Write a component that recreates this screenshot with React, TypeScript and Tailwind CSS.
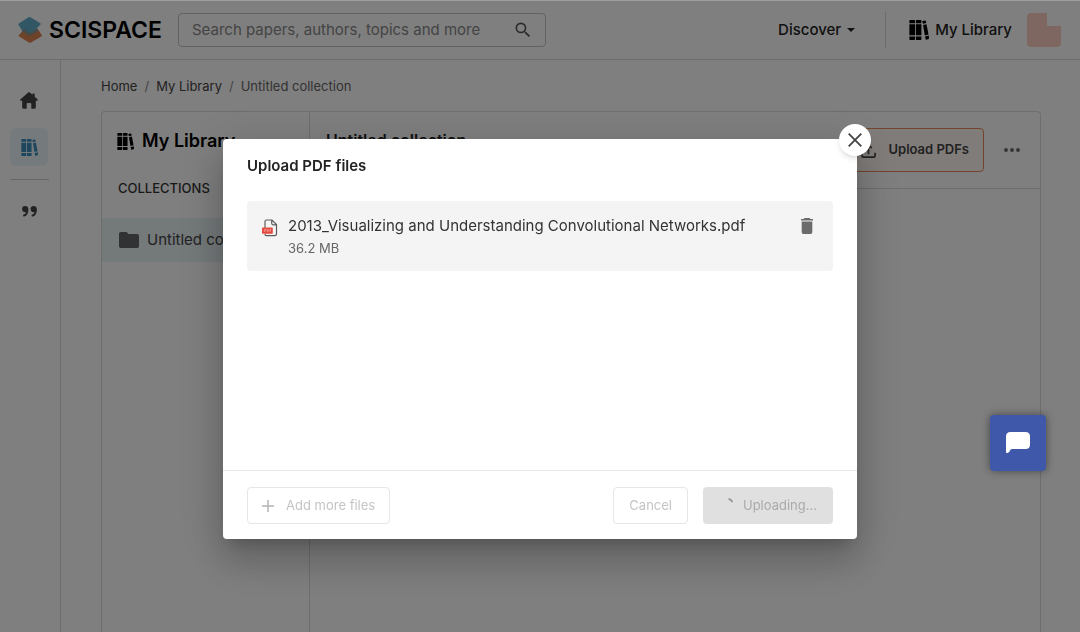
import type { ReactNode } from 'react';

function BooksIcon({ className }: { className: string }) {
  return (
    <svg viewBox="0 0 20 20" fill="currentColor" className={className} aria-hidden="true">
      <path d="M1.200 0h4.200q.6 0 .6.600V3.200H.4V.6Q.4 0 1.200 0zM.4 4.300h5.600v11H.4zM.4 16.400h5.600v2.900q0 .7-.7.7H1.100q-.7 0-.7-.7z" />
      <path d="M7.600 0H11.800q.6 0 .6.600V3.200H6.900V.6Q6.900 0 7.600 0zM6.900 4.300h5.500v11H6.900zM6.900 16.400h5.500v2.900q0 .7-.7.7H7.600q-.7 0-.7-.7z" />
      <path d="M13.600 1.100 16 .5q.7-.1.800.5l.5 2-3.300.8-.6-1.900q-.2-.6.2-.8zM14.100 5l3.400-.8 2 10.300-3.700.9zM16 16.500l3.800-.9.200 2.500q.1.800-.6 1l-2 .6q-.7.1-.8-.6z" />
    </svg>
  );
}

function Logo() {
  return (
    <a href="#home" className="flex w-[145px] shrink-0 items-center gap-[7px] pt-px text-[23px] leading-7 font-semibold text-black">
      <svg viewBox="0 0 24 28" className="h-7 w-6 shrink-0" aria-hidden="true">
        <path d="M5 14.500.9 19.200q-.6.800.3 1.400L11 26.500q1 .6 2 0l10.300-6q.9-.6.400-1.500L19.500 12.500z" fill="#dd8450" />
        <path d="M.8 7.500 10.500 1.300q1-.6 2 0l9.800 5.900q.9.600.2 1.400L18.500 12.500l1.500 2.300-7.300 4.300q-1 .5-2 0L4.300 14.700.5 8.900q-.4-.9.300-1.400z" fill="#62aecb" />
        <path d="M5 14 3.700 15.500 10.700 19.300q1 .5 2 0l7.600-4.400-1.200-2-6.600 3.500q-1 .5-2 0L6.500 13.500z" fill="#8f958b" />
      </svg>
      SCISPACE
    </a>
  );
}

function FolderIcon() {
  return (
    <svg viewBox="0 0 20 16" fill="currentColor" className="h-4 w-5 shrink-0 text-[#626466]" aria-hidden="true">
      <path d="M1.800 0h5.700l2 2h8.700Q20 2 20 3.800v10.400q0 1.800-1.800 1.800H1.800Q0 16 0 14.200V1.800Q0 0 1.800 0z" />
    </svg>
  );
}

function PdfIcon() {
  return (
    <svg viewBox="0 0 16 18" className="h-[18px] w-4 shrink-0" aria-hidden="true">
      <path d="M3 9V2.500Q3 1 4.500 1H10l4.500 4.500V15q0 1.700-1.700 1.700H4.300Q3 16.700 3 15M9.700 1v3.300q0 1.500 1.500 1.500h3" fill="none" stroke="#5c5c5c" strokeWidth="1.200" />
      <rect x="0" y="8.500" width="10.800" height="6.200" rx=".8" fill="#e5483d" />
      <path d="M2.300 13v-2.700h1q.8 0 .8.800t-.8.800h-1M5.200 10.300v2.500q1.500.1 1.500-1.200t-1.500-1.300M8 13v-2.700h1.300M8 11.600h1" fill="none" stroke="#f7b1ab" strokeWidth=".6" />
    </svg>
  );
}

function TopBar() {
  return (
    <header className="flex h-[60px] items-center border-b border-[#d8d8d8] pr-[19px] pl-[18px]">
      <Logo />
      <form className="ml-[15px] flex h-[34px] w-[368px] items-center rounded border border-[#c4c4c4] pr-3 pl-[13px]">
        <input
          type="text"
          aria-label="Search papers"
          placeholder="Search papers, authors, topics and more"
          className="min-w-0 flex-1 bg-transparent pt-px text-[15px] text-[#333] outline-none placeholder:text-[#888]"
        />
        <button type="submit" aria-label="Search" className="text-[#555]">
          <svg viewBox="0 0 24 24" fill="currentColor" className="size-5" aria-hidden="true">
            <path d="M15.500 14h-.79l-.28-.27A6.470 6.470 0 0 0 16 9.500 6.500 6.500 0 1 0 9.500 16c1.610 0 3.090-.59 4.230-1.570l.27.28v.79l5 4.990L20.490 19zm-6 0a4.500 4.500 0 1 1 0-9 4.500 4.500 0 0 1 0 9" />
          </svg>
        </button>
      </form>
      <nav className="ml-auto flex items-center text-[15px] font-medium text-[#222]">
        <button type="button" className="flex items-center gap-[6px] pt-px">
          Discover
          <svg viewBox="0 0 8 4" fill="currentColor" className="h-1 w-2" aria-hidden="true">
            <path d="M0 0h8L4 4z" />
          </svg>
        </button>
        <span className="mr-[23px] ml-[30px] h-9 w-px bg-[#d8d8d8]" />
        <a href="#library" className="flex items-center gap-[6px] pt-px">
          <BooksIcon className="size-5 text-black" />
          My Library
        </a>
        <svg viewBox="0 0 34 34" className="ml-[15px] size-[34px]" role="img" aria-label="Account">
          <path d="M4 0h16v13h14v17q0 4-4 4H4q-4 0-4-4V4q0-4 4-4z" fill="#ffcfc2" />
        </svg>
      </nav>
    </header>
  );
}

function SideRail() {
  return (
    <nav className="flex w-[61px] shrink-0 flex-col items-center border-r border-[#d8d8d8] pt-5 pr-0.5">
      <a href="#home" aria-label="Home" className="flex size-10 items-center justify-center text-[#444]">
        <svg viewBox="0 0 18 17" fill="currentColor" className="h-[17px] w-[18px]" aria-hidden="true">
          <path d="M8.200.4q.8-.7 1.600 0l2.700 2.400V1.500h2.200v3.300l3 2.700q.6.900-.6 1.300H15.800v6.400q0 1.500-1.500 1.500h-3V12q0-1-1-1H7.700q-1 0-1 1v4.700h-3q-1.500 0-1.500-1.500V8.800H.9Q-.3 8.400.3 7.500z" />
        </svg>
      </a>
      <a href="#library" aria-label="My Library" className="mt-2 flex size-[38px] items-center justify-center rounded-md bg-[#eaf4fb] text-[#3d8fbb]">
        <BooksIcon className="size-[17px]" />
      </a>
      <span className="mt-[13px] h-px w-[39px] bg-[#cfcfcf]" />
      <a href="#citations" aria-label="Citations" className="mt-[11px] flex size-10 items-center justify-center text-[#444]">
        <svg viewBox="0 0 15 11" fill="currentColor" className="h-[11px] w-[15px]" aria-hidden="true">
          <path d="M3.200 0a3.100 3.100 0 0 0 0 6.200q.5 0 .8-.1Q3.800 8 1.500 8.800q-.7.500-.4 1.200t1.200.6Q6.400 9.200 6.400 3.500 6.400 0 3.200 0M11.700 0a3.100 3.100 0 0 0 0 6.200q.5 0 .8-.1Q12.300 8 10 8.800q-.7.500-.4 1.200t1.200.6q4.100-1.400 4.100-7.100Q14.900 0 11.700 0" />
        </svg>
      </a>
    </nav>
  );
}

function Crumb({ children }: { children: ReactNode }) {
  return (
    <>
      <a href="#library">{children}</a>
      <span className="text-[#888]">/</span>
    </>
  );
}

function LibraryPage() {
  return (
    <div className="flex min-h-screen flex-col">
      <TopBar />
      <div className="flex flex-1">
        <SideRail />
        <main className="flex flex-1 flex-col pt-4 pr-[39px] pl-10">
          <nav aria-label="Breadcrumb" className="flex gap-[7px] text-[13px] leading-5 text-[#444]">
            <Crumb>Home</Crumb>
            <Crumb>My Library</Crumb>
            <span className="text-[#666]">Untitled collection</span>
          </nav>
          <div className="mt-[15px] flex flex-1 rounded-t border border-b-0 border-[#dcdcdc]">
            <aside className="w-[208px] shrink-0 border-r border-[#dcdcdc] pt-[15px]">
              <h2 className="flex items-center gap-2 px-[15px] text-[18px] leading-7 font-semibold whitespace-nowrap text-black">
                <BooksIcon className="size-[17px]" />
                My Library
              </h2>
              <h3 className="mt-[23px] px-4 text-[13px] leading-5 font-medium text-[#333]">COLLECTIONS</h3>
              <a href="#collection" className="mt-5 flex h-11 items-center gap-2 bg-[#e8f2f5] px-[17px] text-[15px] whitespace-nowrap text-[#444]">
                <FolderIcon />
                Untitled collection
              </a>
            </aside>
            <section className="flex-1">
              <div className="flex h-[77px] items-center border-b border-[#dcdcdc] pr-5 pl-4">
                <h1 className="mb-5 text-[16px] leading-6 font-semibold text-[#222]">Untitled collection</h1>
                <button type="button" className="ml-auto flex h-11 items-center gap-3 rounded border border-[#e8895a] bg-[#fff8f3] px-[14px] text-[13px] font-semibold text-[#444]">
                  <svg viewBox="0 0 16 16" fill="none" stroke="currentColor" strokeWidth="1.800" className="size-[15px]" aria-hidden="true">
                    <path d="M1 10.500v3q0 1.500 1.500 1.500h11q1.500 0 1.500-1.500v-3M8 12V2M4.500 5.500 8 2l3.500 3.500" />
                  </svg>
                  Upload PDFs
                </button>
                <button type="button" aria-label="More options" className="ml-5 text-[#666]">
                  <svg viewBox="0 0 16 4" fill="currentColor" className="h-1 w-4" aria-hidden="true">
                    <circle cx="2" cy="2" r="1.900" />
                    <circle cx="8" cy="2" r="1.900" />
                    <circle cx="14" cy="2" r="1.900" />
                  </svg>
                </button>
              </div>
            </section>
          </div>
        </main>
      </div>
    </div>
  );
}

function UploadDialog() {
  return (
    <div className="fixed inset-0 flex items-start justify-center border-t border-white/25 bg-black/50 pt-[138px]">
      <div
        role="dialog"
        aria-modal="true"
        aria-labelledby="upload-title"
        className="relative flex min-h-[400px] w-full max-w-[634px] flex-col rounded bg-white shadow-[0_11px_15px_-7px_rgba(0,0,0,0.2),0_24px_38px_3px_rgba(0,0,0,0.14),0_9px_46px_8px_rgba(0,0,0,0.12)]"
      >
        <button type="button" aria-label="Close" className="absolute -top-[15px] -right-[14px] flex size-8 items-center justify-center rounded-full bg-white text-[#444] shadow-md">
          <svg viewBox="0 0 14 14" fill="none" stroke="currentColor" strokeWidth="1.800" className="size-[14px]" aria-hidden="true">
            <path d="m.7.7 12.600 12.600M13.300.7.7 13.300" />
          </svg>
        </button>
        <h2 id="upload-title" className="px-6 pt-4 text-[15px] leading-[22px] font-semibold text-[#222]">
          Upload PDF files
        </h2>
        <ul className="flex-1 px-6 pt-6">
          <li className="flex h-[70px] items-start rounded bg-[#f4f4f4] px-[15px] pt-[14px]">
            <span className="pt-1">
              <PdfIcon />
            </span>
            <div className="ml-[10px]">
              <p className="text-[15px] leading-[22px] text-[#333]">2013_Visualizing and Understanding Convolutional Networks.pdf</p>
              <p className="text-[13px] leading-[22px] text-[#666]">36.2 MB</p>
            </div>
            <button type="button" aria-label="Remove file" className="mt-[3px] ml-auto mr-[5px] text-[#6b6b6b]">
              <svg viewBox="0 0 12 16" fill="currentColor" className="h-4 w-3" aria-hidden="true">
                <path d="M3.500 0h5l.8.900H12v1.700H0V.900h2.700zM.7 3.500h10.600v10.800q0 1.700-1.700 1.700H2.400Q.7 16 .7 14.300z" />
              </svg>
            </button>
          </li>
        </ul>
        <footer className="flex items-center border-t border-[#e8e8e8] px-6 pt-4 pb-[15px] text-[13px] text-[#c4c4c4]">
          <button type="button" disabled className="flex h-[37px] items-center gap-3 rounded border border-[#e6e6e6] px-[14px]">
            <svg viewBox="0 0 12 12" fill="none" stroke="#b4b4b4" strokeWidth="1.500" className="size-3" aria-hidden="true">
              <path d="M6 0v12M0 6h12" />
            </svg>
            Add more files
          </button>
          <button type="button" disabled className="ml-auto h-[37px] rounded border border-[#e6e6e6] px-[15px]">
            Cancel
          </button>
          <button type="button" disabled className="ml-[15px] flex h-[37px] items-center gap-[10px] rounded bg-[#e0e0e0] pr-4 pl-[14px] text-[#aaa]">
            <svg viewBox="0 0 16 16" fill="none" stroke="#999" strokeWidth="1.800" className="size-4" aria-hidden="true">
              <path d="M11.500.8q2.500.600 4 3.200" />
            </svg>
            Uploading...
          </button>
        </footer>
      </div>
    </div>
  );
}

function ChatButton() {
  return (
    <button type="button" aria-label="Open chat" className="fixed right-[34px] bottom-[161px] flex size-14 items-center justify-center rounded bg-[#3f58a9] shadow-[0_0_8px_rgba(0,0,0,0.45)]">
      <svg viewBox="0 0 24 22" fill="#fff" className="h-[22px] w-6" aria-hidden="true">
        <path d="M4.500 0h15Q24 0 24 4.500v8q0 4.500-4.500 4.500H6Q4 17.200 3.300 20 0 22.500 0 19.500v-15Q0 0 4.500 0z" />
      </svg>
    </button>
  );
}

export default function App() {
  return (
    <div className="bg-white font-[Inter,'Liberation_Sans',sans-serif]">
      <LibraryPage />
      <UploadDialog />
      <ChatButton />
    </div>
  );
}
